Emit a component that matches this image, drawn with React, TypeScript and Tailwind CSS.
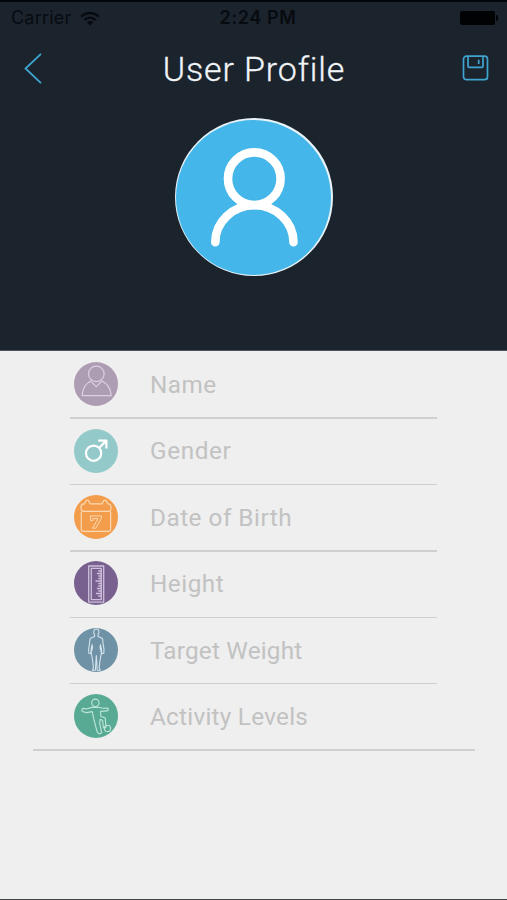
import type { ReactNode } from "react";

type Field = {
  label: string;
  color: string;
  tracking: string;
  icon: ReactNode;
};

// Row icons are all drawn on a 44x44 disc
const fields: Field[] = [
  {
    label: "Name",
    color: "bg-[#ad9db3]",
    tracking: "tracking-[0.5px]",
    icon: (
      <g stroke="#dccfe3" strokeWidth="1.2">
        <circle cx="22.3" cy="11.9" r="7.8" />
        <path d="M17.5 18.6C11 21.5 8.6 26 8 33.7H37.3C36.6 26 34 21.5 27.2 18.6M17.5 19.8L22.3 24.6L27.2 19.8" />
      </g>
    ),
  },
  {
    label: "Gender",
    color: "bg-[#94c9c9]",
    tracking: "tracking-[0.6px]",
    icon: (
      <g stroke="#fff" strokeWidth="2.2">
        <circle cx="19.6" cy="24.2" r="7.6" />
        <path d="M25.2 18.8L32.4 11.6M24.2 11.6H32.4V19.4" />
      </g>
    ),
  },
  {
    label: "Date of Birth",
    color: "bg-[#f39c4b]",
    tracking: "tracking-[0.5px]",
    icon: (
      <g stroke="#fbd9b4" strokeWidth="1.2">
        <path d="M7.3 16.5V34.3Q7.3 36.3 9.3 36.3H34.6Q36.6 36.3 36.6 34.3V16.5" />
        <path d="M9.5 8.8H10.6L12.2 5.3H14.4L16 8.8H28.2L29.8 5.3H32L33.6 8.8H34.8Q37 9.5 37 12Q37 16.3 34.8 16.3H9.5Q7 16.3 7 12Q7 9.5 9.5 8.8Z" />
        <path d="M16.6 20.9H27.4V23.4L21.8 33.2H18.6L24 23.6H19V25.6H16.6Z" strokeWidth="1" />
      </g>
    ),
  },
  {
    label: "Height",
    color: "bg-[#78618f]",
    tracking: "tracking-[0.5px]",
    icon: (
      <g stroke="#cdbfdb" strokeWidth="1.3">
        <path d="M14.7 5H29.7V41.1H14.7Z" />
        <path d="M17.3 7.4H27.3V38.6H17.3Z" />
        <path
          d="M24.3 10H27M22.9 12.5H27M24.3 15H27M24.3 17.5H27M21.5 20H27M24.3 22.5H27M24.3 25H27M22.9 27.5H27M24.3 30H27M22 32.5H27M24.3 35H27"
          strokeWidth="1.4"
        />
      </g>
    ),
  },
  {
    label: "Target Weight",
    color: "bg-[#6f92a6]",
    tracking: "tracking-[0.2px]",
    icon: (
      <g stroke="#d3e3ec" strokeWidth="1.1">
        <path d="M20.6 6.8C18.9 4.2 19.6 1 22.3 1C25 1 25.8 4.2 24 6.8V8.6L28 10.3Q28.9 11 28.9 14L30 21.5L29.8 25.2L27.8 25.8L27.4 20.5L26.5 16.5L26 19.5L27.4 24.5L25.8 34L25.2 39.8L26.2 42.2H23.2L22.8 35L22.3 27.5L21.8 35L21.4 42.2H18.4L19.4 39.8L18.8 34L17.2 24.5L18.6 19.5L18.1 16.5L17.2 20.5L16.8 25.8L14.8 25.2L14.6 21.5L15.7 14Q15.7 11 16.6 10.3L20.6 8.6Z" />
      </g>
    ),
  },
  {
    label: "Activity Levels",
    color: "bg-[#58aa94]",
    tracking: "tracking-[0.25px]",
    icon: (
      <g stroke="#bfe6d8" strokeWidth="1.1">
        <circle cx="21.4" cy="8.8" r="3.7" />
        <path d="M17.8 13.4L12.6 15L9.6 14.4Q7 15.2 8.2 17.5L12.6 18.6L18.3 17.6L19.8 25.2L23.2 38Q25 40.8 27.7 38.9L25.6 29.2L26.2 25.2L28.6 26.5L29.4 33.4Q30.5 35 32 33.2L31.2 24L26.8 22.2L26.5 17.4L33.2 16.9Q35.3 15.8 33.4 14L29 14.3L24.5 13.2Z" />
        <circle cx="33.5" cy="34.4" r="3.1" />
      </g>
    ),
  },
];

function StatusBar() {
  return (
    <div className="grid h-[34px] grid-cols-3 items-center border-t-2 border-[#02060c] pl-[11px] pr-[9px] text-[#070b10]">
      <div className="flex items-center gap-[9px]">
        <span className="text-[18px] leading-none tracking-[0.2px]">Carrier</span>
        <svg width="20" height="15" viewBox="0 0 20 15" fill="none" stroke="currentColor" strokeWidth="2.6">
          <path d="M1.2 5.6C6.3.7 13.7.7 18.8 5.6" />
          <path d="M4.5 9C7.8 6 12.2 6 15.5 9" />
          <path d="M10 14.4L6.8 11.2Q10 8.6 13.2 11.2Z" fill="currentColor" stroke="none" />
        </svg>
      </div>
      <span className="pl-[7px] text-center text-[18px] font-semibold leading-none tracking-[0.6px] whitespace-nowrap">
        2:24 PM
      </span>
      <div className="flex items-center justify-end gap-px">
        <span className="h-[14px] w-[35px] rounded-[2px] bg-[#010204]" />
        <span className="h-[6px] w-[2px] rounded-r-full bg-[#010204]" />
      </div>
    </div>
  );
}

function Avatar() {
  return (
    <div className="mx-auto mt-[14px] size-[158px] rounded-full bg-[#e8f4fa] p-[1.5px]">
      <svg className="size-full rounded-full bg-[#45b6e9]" viewBox="0 0 155 155" fill="none" stroke="#fff" strokeWidth="8.6">
        <circle cx="78.3" cy="58.7" r="26.3" />
        <path d="M39.3 122.2A39.1 37 0 0 1 117.5 122.2" strokeLinecap="round" />
      </svg>
    </div>
  );
}

function FieldRow({ label, color, tracking, icon }: Field) {
  return (
    <div className="flex h-[66.4px] items-center pl-[74px]">
      <span className={`size-11 rounded-full ${color}`}>
        <svg className="size-11" viewBox="0 0 44 44" fill="none" strokeLinejoin="round">
          {icon}
        </svg>
      </span>
      <span className={`ml-8 pt-[2px] font-['Roboto'] text-[24.3px] leading-none text-[#c2c2c2] ${tracking}`}>
        {label}
      </span>
    </div>
  );
}

export default function App() {
  return (
    <div className="flex h-[900px] w-[507px] flex-col overflow-hidden border-b border-[#45464a] bg-[#efefef] font-['Inter',sans-serif]">
      <header className="h-[351px] shrink-0 border-b border-[#4d5260] bg-[#1b232d]">
        <StatusBar />
        <div className="flex h-[70px] items-center justify-between pl-6 pr-[18px]">
          <svg className="mb-[2px]" width="18" height="31" viewBox="0 0 18 31" fill="none" stroke="#3fa5d0" strokeWidth="1.8">
            <path d="M17 .8L1.5 15.5L17 30.2" />
          </svg>
          <h1 className="pl-1 font-['Roboto'] text-[34px] font-light leading-none tracking-[0.85px] whitespace-nowrap text-[#f1f5f8] [-webkit-text-stroke:0.3px_#f1f5f8]">
            User Profile
          </h1>
          <svg className="mb-[2px]" width="27" height="26" viewBox="0 0 27 26" fill="none" stroke="#3fa5d0" strokeWidth="1.7">
            <rect x="1.5" y="1.2" width="24" height="23.5" rx="3" />
            <path d="M6 1.5V11.2Q6 12.3 7.2 12.3H19.8Q21 12.3 21 11.2V1.5M16.7 4.8V9" />
          </svg>
        </div>
        <Avatar />
      </header>
      <main>
        {fields.map((field, i) => (
          <div key={field.label} className="h-[66.4px]">
            <FieldRow {...field} />
            {i < fields.length - 1 ? (
              <div className="mx-[70px] h-[1.5px] bg-[#cfcfcf]" />
            ) : (
              <div className="ml-[33px] mr-8 h-[1.5px] bg-[#cfcfcf]" />
            )}
          </div>
        ))}
      </main>
    </div>
  );
}
